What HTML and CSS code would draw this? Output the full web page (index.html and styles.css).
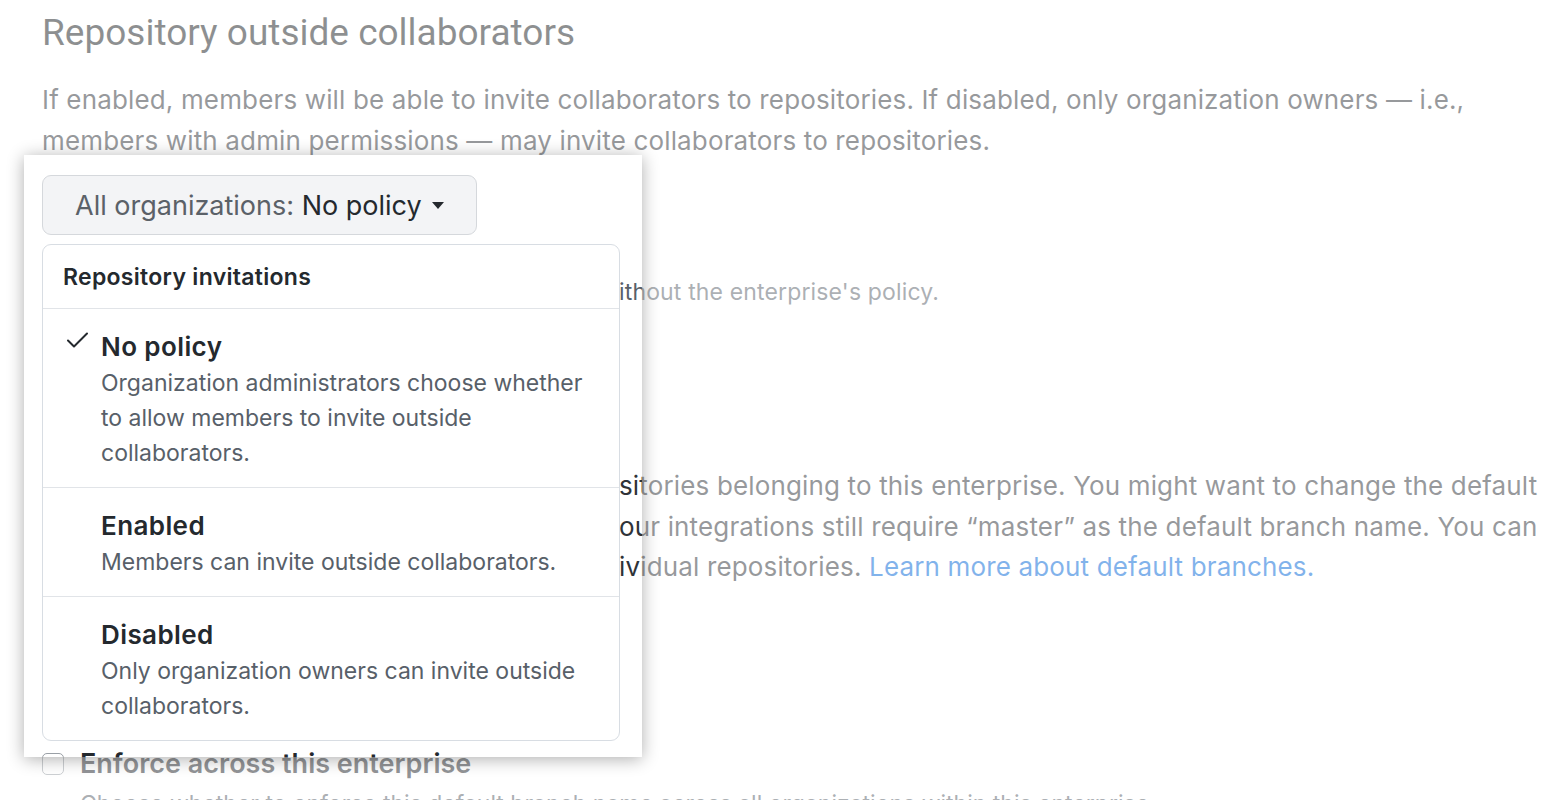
FILE: index.html
```html
<!DOCTYPE html>
<html lang="en">
<head>
<meta charset="utf-8">
<title>Repository outside collaborators</title>
<link rel="stylesheet" href="styles.css">
</head>
<body>
<main class="page">
  <h2 class="title">Repository outside collaborators</h2>
  <p class="lead">If enabled, members will be able to invite collaborators to repositories. If disabled, only organization owners — i.e., members with admin permissions — may invite collaborators to repositories.</p>

  <div class="policy">
    <button class="select" type="button"><span class="select-label">All organizations:</span>&nbsp;<span class="select-value">No policy</span><span class="caret"></span></button>
    <div class="menu">
      <div class="menu-header">Repository invitations</div>
      <div class="menu-item selected">
        <svg class="check" width="22" height="16" viewBox="0 0 22 16" aria-hidden="true"><polyline points="2,8.5 8,14.5 21,1.5" fill="none" stroke="#24292e" stroke-width="2" stroke-linecap="round" stroke-linejoin="round"/></svg>
        <div class="item-text">
          <div class="item-title">No policy</div>
          <div class="item-desc">Organization administrators choose whether to allow members to invite outside collaborators.</div>
        </div>
      </div>
      <div class="menu-item">
        <span class="check-space"></span>
        <div class="item-text">
          <div class="item-title">Enabled</div>
          <div class="item-desc">Members can invite outside collaborators.</div>
        </div>
      </div>
      <div class="menu-item">
        <span class="check-space"></span>
        <div class="item-text">
          <div class="item-title">Disabled</div>
          <div class="item-desc">Only organization owners can invite outside collaborators.</div>
        </div>
      </div>
    </div>
  </div>

  <p class="note cut">ithout the enterprise's policy.</p>

  <p class="body cut">sitories belonging to this enterprise. You might want to change the default<br>our integrations still require “master” as the default branch name. You can<br>ividual repositories. <a class="link" href="#">Learn more about default branches.</a></p>

  <label class="enforce"><span class="checkbox"></span>Enforce across this enterprise</label>
  <p class="hint">Choose whether to enforce this default branch name across all organizations within this enterprise.</p>

  <div class="spotlight"></div>
</main>
</body>
</html>
```

FILE: styles.css
```css
html, body {
  margin: 0;
  padding: 0;
  background: #ffffff;
  overflow: hidden;
  height: 800px;
}

.page {
  position: relative;
  padding: 11px 0 0 42px;
  font-family: Inter, "Noto Sans", sans-serif;
  color: #24292e;
}

.title {
  margin: 0;
  font-family: Roboto, "Liberation Sans", sans-serif;
  font-size: 37px;
  line-height: 44px;
  font-weight: 400;
  color: #1b1f23;
}

.lead {
  margin: 24px 0 0;
  width: 1480px;
  font-size: 26px;
  letter-spacing: 0.15px;
  line-height: 41px;
  color: #2f3338;
}

/* dropdown */
.policy {
  position: relative;
  z-index: 2;
  margin-top: 14px;
  height: 60px;
}

.select {
  display: inline-flex;
  align-items: center;
  height: 60px;
  box-sizing: border-box;
  padding: 0 32px 0 32px;
  border: 1px solid #d5d8dc;
  border-radius: 9px;
  background: #f3f4f6;
  font-family: Inter, "Noto Sans", sans-serif;
  font-size: 27px;
  color: #24292e;
}

.select-label {
  color: #5b6168;
}

.select-value {
  color: #24292e;
}

.caret {
  display: inline-block;
  width: 0;
  height: 0;
  margin-left: 10px;
  border-top: 7px solid #24292e;
  border-left: 6.5px solid transparent;
  border-right: 6.5px solid transparent;
}

.menu {
  position: absolute;
  top: 69px;
  left: 0;
  width: 578px;
  box-sizing: border-box;
  background: #ffffff;
  border: 1px solid #d8dde3;
  border-radius: 9px;
  overflow: hidden;
}

.menu-header {
  height: 63px;
  line-height: 64px;
  padding: 0 20px;
  font-size: 23px;
  letter-spacing: 0.3px;
  font-weight: 600;
  color: #24292e;
  border-bottom: 1px solid #e1e4e8;
}

.menu-item {
  display: grid;
  grid-template-columns: 22px 1fr;
  column-gap: 13px;
  padding: 21px 24px 16px 23px;
  border-bottom: 1px solid #e1e4e8;
}

.menu-item:last-child {
  border-bottom: none;
}

.check {
  display: block;
  margin-top: 2px;
}

.item-title {
  margin-bottom: 2px;
  font-size: 26px;
  letter-spacing: 0.4px;
  line-height: 34px;
  font-weight: 600;
  color: #24292e;
}

.item-desc {
  font-size: 23px;
  line-height: 35px;
  color: #586069;
}

/* text continuing to the right of the open dropdown */
.cut {
  padding-left: 577px;
}

.note {
  margin: 42px 0 0;
  font-size: 23px;
  letter-spacing: 0.15px;
  line-height: 30px;
  color: #586069;
}

.body {
  margin: 159px 0 0;
  font-size: 26px;
  letter-spacing: 0.15px;
  line-height: 40.5px;
  color: #2f3338;
}

.link {
  color: #0366d6;
  text-decoration: none;
}

.enforce {
  display: flex;
  align-items: center;
  gap: 16px;
  margin-top: 159px;
  height: 34px;
  font-size: 27px;
  font-weight: 600;
  color: #24292e;
}

.checkbox {
  width: 20px;
  height: 20px;
  border: 1px solid #9aa0a6;
  border-radius: 5px;
  background: #ffffff;
}

.hint {
  margin: 6px 0 0 38px;
  font-size: 23px;
  line-height: 34px;
  color: #586069;
}

/* highlighted region: the rest of the page is washed out */
.spotlight {
  position: absolute;
  z-index: 1;
  left: 24px;
  top: 155px;
  width: 618px;
  height: 602px;
  pointer-events: none;
  box-shadow: 0 2px 16px rgba(0, 0, 0, 0.32), 0 0 0 4000px rgba(255, 255, 255, 0.5);
}
```
